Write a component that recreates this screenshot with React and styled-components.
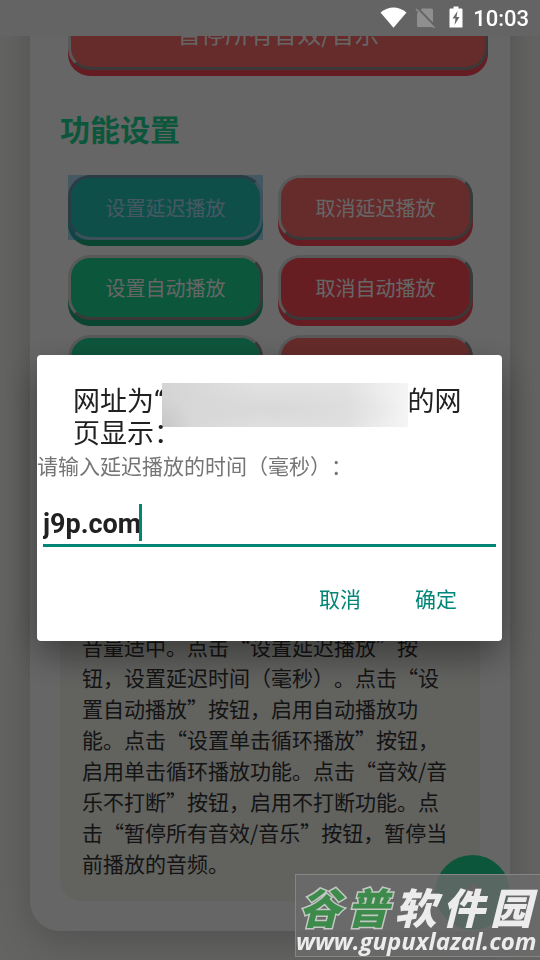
import React, { useState } from "react";
import styled, { createGlobalStyle } from "styled-components";

const GREEN = "#20d796";
const RED = "#ff4757";
const ACCENT = "#008577";

const GlobalStyle = createGlobalStyle`
  * {
    box-sizing: border-box;
  }

  body {
    margin: 0;
    background: #f9f9f7;
    font-family: "Noto Sans CJK SC", sans-serif;
    text-spacing-trim: space-all;
  }

  button,
  input {
    font: inherit;
  }
`;

const Screen = styled.div`
  display: flex;
  flex-direction: column;
  justify-content: flex-end;
  height: 100vh;
  padding: 0 30px 29px;
  overflow: hidden;
`;

const Card = styled.main`
  flex-shrink: 0;
  padding: 30px;
  border-radius: 30px;
  background: #fff;
  box-shadow: 0 10px 40px rgba(0, 0, 0, 0.2);
`;

const Heading = styled.h2`
  margin: 35px 0 24px;
  font-size: 30px;
  line-height: 46px;
  color: ${GREEN};
`;

const ButtonGrid = styled.div`
  display: grid;
  grid-template-columns: 1fr 1fr;
  gap: 15px;
  padding: 0 7px 0 8px;
`;

const colors = {
  green: { face: GREEN, edge: "#1aac7e" },
  coral: { face: "#ff6b6b", edge: RED },
  red: { face: "#ff4d57", edge: RED },
};

const SoundButton = styled.button`
  position: relative;
  height: 65px;
  padding: 0;
  border: 3px solid;
  border-color: ${(props) =>
    props.$pressed
      ? "#8e8e8e #e0e0e0 #e0e0e0 #8e8e8e"
      : "#dedede #8e8e8e #8e8e8e #dedede"};
  border-radius: 22px;
  background: ${(props) => colors[props.$color].face};
  box-shadow: 0 6px 0 ${(props) => colors[props.$color].edge};
  color: #fff;
  font-size: 20px;

  &::after {
    content: "";
    display: ${(props) => (props.$pressed ? "block" : "none")};
    position: absolute;
    inset: -3px;
    background: rgba(51, 170, 229, 0.4);
  }
`;

const StopButton = styled(SoundButton)`
  display: block;
  width: 100%;
  height: 75px;
  margin-left: 8px;
  font-size: 24px;
`;

const Guide = styled.p`
  margin: 209px 0 0;
  padding: 22px;
  border-radius: 22px;
  background: #f4f4ee;
  color: #333;
  font-size: 21px;
  line-height: 31px;
`;

const TopLink = styled.button`
  position: fixed;
  right: 30px;
  bottom: 30px;
  display: grid;
  place-items: center;
  width: 75px;
  height: 75px;
  padding: 0;
  border: 0;
  border-radius: 50%;
  background: ${GREEN};
`;

const StatusBackdrop = styled.div`
  position: fixed;
  inset: 0 0 auto;
  height: 36px;
  background: #fafafa;
`;

const Scrim = styled.div`
  position: fixed;
  inset: 0;
  display: flex;
  flex-direction: column;
  background: rgba(0, 0, 0, 0.6);
`;

const StatusBar = styled.header`
  display: flex;
  align-items: center;
  justify-content: flex-end;
  height: 36px;
  padding: 0 11px;
  color: #fff;
  font: 500 22px Roboto, sans-serif;
`;

const StatusIcons = styled.svg`
  width: 84px;
  height: 36px;
  margin-right: 10px;
`;

const DialogArea = styled.div`
  display: flex;
  flex: 1;
  align-items: center;
  padding: 0 38px 0 37px;
`;

const Dialog = styled.section`
  flex: 1;
  min-width: 0;
  padding: 31px 0 22px;
  border-radius: 4px;
  background: #fff;
  box-shadow: 0 14px 36px rgba(0, 0, 0, 0.4);
  font-family: Roboto, "Noto Sans CJK SC", sans-serif;
`;

const Title = styled.h1`
  margin: 0;
  padding: 0 36px;
  color: #212121;
  font-size: 27px;
  font-weight: 400;
  line-height: 32px;
`;

const HiddenAddress = styled.span`
  display: inline-block;
  width: 246px;
  height: 44px;
  margin: -3px 0 -9px -2px;
  vertical-align: top;
  background:
    radial-gradient(circle at 0 100%, rgba(180, 180, 180, 0.4), transparent 30px),
    radial-gradient(ellipse at 45% 60%, rgba(210, 210, 210, 0.6), transparent 70%),
    linear-gradient(90deg, #d4d4d4, #e2e2e2 40%, #e2e2e2 75%, #f5f5f5);
`;

const Message = styled.label`
  display: block;
  color: #757575;
  font-size: 21px;
  line-height: 34px;
`;

const Field = styled.div`
  display: flex;
  align-items: center;
  margin: 20px 6px 0;
  padding-bottom: 3px;
  border-bottom: 3px solid ${ACCENT};
`;

const Input = styled.input`
  field-sizing: content;
  max-width: 100%;
  height: 37px;
  padding: 2px 0 0;
  border: 0;
  outline: none;
  background: transparent;
  color: #212121;
  caret-color: ${ACCENT};
  font-size: 27px;
  font-weight: 700;
`;

const Caret = styled.span`
  width: 3px;
  height: 37px;
  margin-left: -2px;
  background: ${ACCENT};
`;

const Actions = styled.div`
  display: flex;
  justify-content: flex-end;
  gap: 54px;
  margin-top: 30px;
  padding: 0 45px 0 0;
`;

const Action = styled.button`
  height: 42px;
  padding: 0;
  border: 0;
  background: none;
  color: ${ACCENT};
  font-size: 21px;
`;

const Watermark = styled.aside`
  position: fixed;
  right: 0;
  bottom: 3px;
  width: 245px;
  height: 83px;
  border: 1px solid #858585;
  border-right: 0;
  background: rgba(108, 108, 108, 0.8);
  color: #ececec;
`;

const SiteName = styled.div`
  display: flex;
  justify-content: space-between;
  padding: 6px 8px 0 3px;
  font-size: 42px;
  font-style: italic;
  font-weight: 900;
  line-height: 50px;
`;

const Mark = styled.span`
  color: ${(props) => (props.$green ? "#3d8b4b" : "#ececec")};
  -webkit-text-stroke: ${(props) => (props.$green ? "3px #c4c8c4" : "0")};
  paint-order: stroke fill;
`;

const SiteUrl = styled.div`
  font: italic 700 24px/20px "Open Sans", sans-serif;
  white-space: nowrap;
`;

const buttons = [
  { label: "设置延迟播放", color: "green", pressed: true },
  { label: "取消延迟播放", color: "coral" },
  { label: "设置自动播放", color: "green" },
  { label: "取消自动播放", color: "red" },
  { label: "设置循环播放", color: "green" },
  { label: "取消循环播放", color: "coral" },
];

function Icons() {
  return (
    <StatusIcons viewBox="379 0 84 36" aria-hidden="true">
      <path d="M380.5 12.5Q393.5 2.5 406.5 12.5L393.5 27.8Z" fill="#fff" />
      <path
        d="M422 8.5H431.5Q433 8.5 433 10V27H418.500Q417 27 417 25.500V13.500Z"
        fill="#8f8f8f"
      />
      <path d="M417.500 8L436 27" stroke="#646464" strokeWidth="2" />
      <path d="M416 9L434.500 28" stroke="#8f8f8f" strokeWidth="1.500" />
      <path
        d="M453.500 6.500H458.500V8.500H461.500Q462.500 8.500 462.500 9.500V27.500H449.500V9.500Q449.500 8.500 450.500 8.500H453.500Z"
        fill="#fff"
      />
      <path d="M457.500 11L452.500 18.500H455.500L454.500 25L459.500 17H456.500Z" fill="#666" />
    </StatusIcons>
  );
}

export default function App() {
  const [delay, setDelay] = useState("j9p.com");

  return (
    <div lang="zh-CN">
      <GlobalStyle />
      <Screen>
        <Card>
          <StopButton $color="coral">暂停所有音效/音乐</StopButton>
          <Heading>功能设置</Heading>
          <ButtonGrid>
            {buttons.map((button) => (
              <SoundButton
                key={button.label}
                $color={button.color}
                $pressed={button.pressed}
              >
                {button.label}
              </SoundButton>
            ))}
          </ButtonGrid>
          <Guide>
            音量适中。点击“设置延迟播放”按钮，设置延迟时间（毫秒）。点击“设置自动播放”按钮，启用自动播放功能。点击“设置单击循环播放”按钮，启用单击循环播放功能。点击“音效/音乐不打断”按钮，启用不打断功能。点击“暂停所有音效/音乐”按钮，暂停当前播放的音频。
          </Guide>
        </Card>
      </Screen>
      <TopLink aria-label="返回顶部">
        <svg width="24" height="24" viewBox="0 0 24 24" aria-hidden="true">
          <path d="M12 2L20 12H15V22H9V12H4Z" fill="#ff9a9a" />
        </svg>
      </TopLink>
      <StatusBackdrop />
      <Scrim>
        <StatusBar>
          <Icons />
          <span>10:03</span>
        </StatusBar>
        <DialogArea>
          <Dialog role="dialog" aria-labelledby="dialog-title">
            <Title id="dialog-title">
              网址为“
              <HiddenAddress />
              的网页显示：
            </Title>
            <Message htmlFor="delay">请输入延迟播放的时间（毫秒）：</Message>
            <Field>
              <Input
                id="delay"
                value={delay}
                onChange={(e) => setDelay(e.target.value)}
              />
              <Caret />
            </Field>
            <Actions>
              <Action>取消</Action>
              <Action>确定</Action>
            </Actions>
          </Dialog>
        </DialogArea>
      </Scrim>
      <Watermark>
        <SiteName>
          <Mark $green>谷</Mark>
          <Mark $green>普</Mark>
          <Mark>软</Mark>
          <Mark>件</Mark>
          <Mark>园</Mark>
        </SiteName>
        <SiteUrl>www.gupuxlazal.com</SiteUrl>
      </Watermark>
    </div>
  );
}
